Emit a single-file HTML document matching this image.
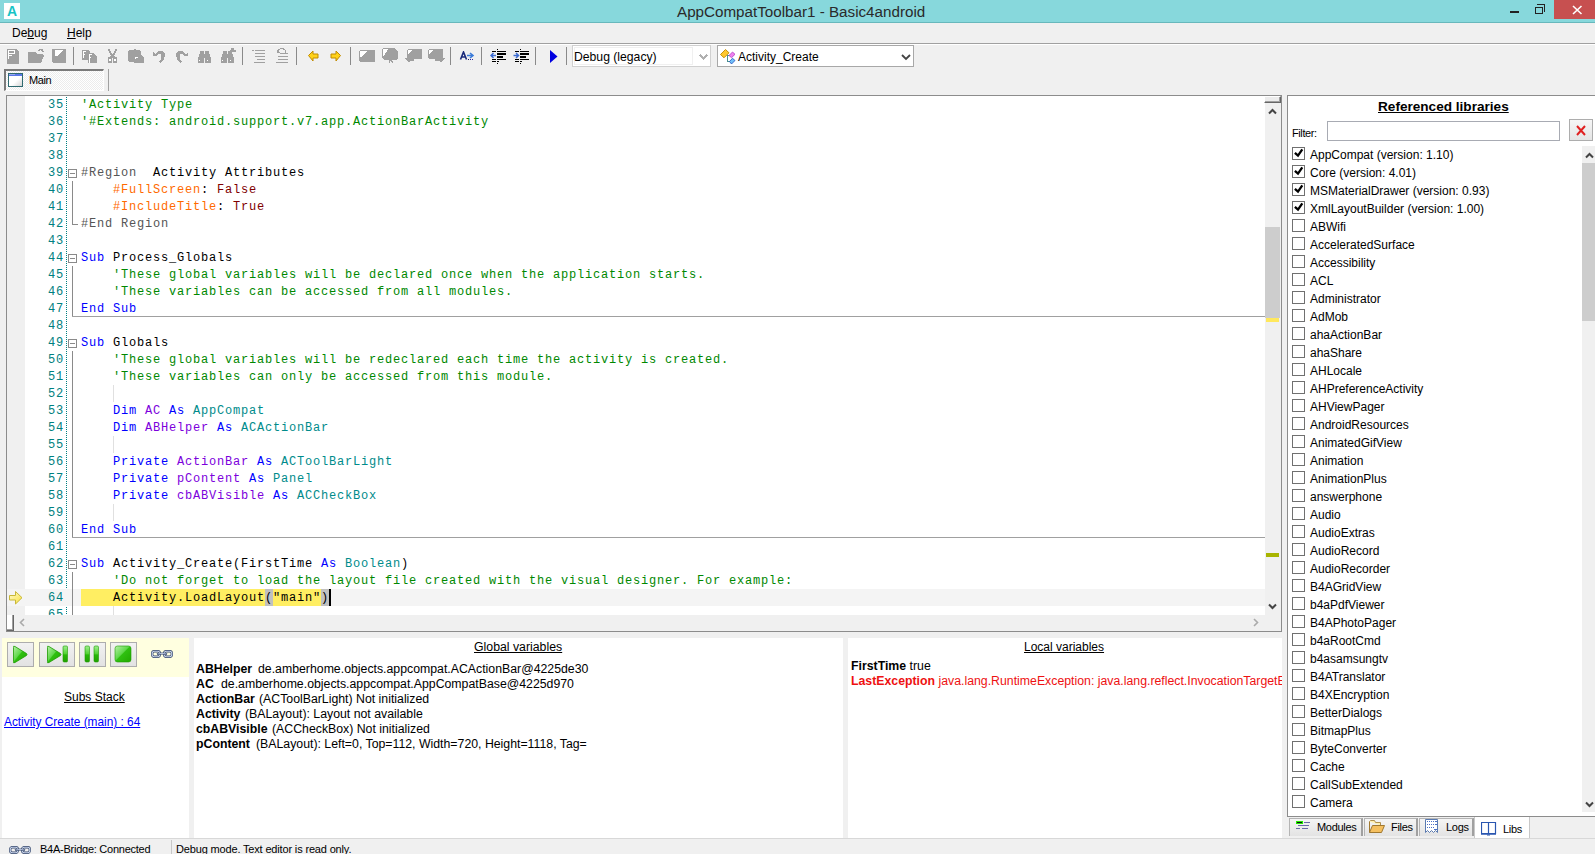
<!DOCTYPE html><html><head><meta charset="utf-8"><style>
*{margin:0;padding:0;box-sizing:border-box}
html,body{width:1595px;height:854px;overflow:hidden;background:#f0f0f0;font-family:"Liberation Sans",sans-serif;font-size:12px;color:#000}
.a{position:absolute}
.nw{white-space:nowrap}
#title{left:0;top:0;width:1595px;height:23px;background:#87d8dc;border-bottom:1px solid #68b8bc}
#menu{left:0;top:23px;width:1595px;height:20px}
.row{position:absolute;left:0;height:17px;width:1258px;font-family:"Liberation Mono",monospace;font-size:12px;letter-spacing:0.8px;line-height:17px;white-space:pre}
.ln{position:absolute;left:0;top:1px;width:57px;text-align:right;color:#008080}
.cd{position:absolute;left:74px;top:1px}
.cm{color:#008800}.kw{color:#0000ff}.vr{color:#7c00dc}.ty{color:#008b8b}.rg{color:#555}.at{color:#ff6a00}.bo{color:#800000}
.lib{position:absolute;left:4px;height:18px;width:280px}
.cb{position:absolute;left:0;top:0;width:13px;height:13px;border:1px solid #707070;background:#fff}
.lbl{position:absolute;left:18px;top:-1px;white-space:nowrap;font-size:12px;line-height:18px}
.var{position:absolute;white-space:nowrap;font-size:12.3px;line-height:15px;margin-top:1px}
.var b{font-weight:bold;font-size:12.6px}
</style></head><body>
<div id="title" class="a">
<div class="a" style="left:4px;top:3px;width:16px;height:16px;background:#fff;color:#19c3c6;font-weight:bold;font-size:14px;line-height:16px;text-align:center">A</div>
<div class="a nw" style="left:677px;top:2px;font-size:15.2px;line-height:19px;color:#2a2a2a">AppCompatToolbar1 - Basic4android</div>
<div class="a" style="left:1510px;top:11px;width:9px;height:2px;background:#222"></div>
<div class="a" style="left:1535px;top:7px;width:8px;height:7px;border:1px solid #222"></div>
<div class="a" style="left:1537px;top:4px;width:8px;height:8px;border-top:1px solid #222;border-right:1px solid #222"></div>
<div class="a" style="left:1554px;top:0;width:41px;height:19px;background:#c75050"></div>
<svg class="a" style="left:1572px;top:5px" width="11" height="10"><path d="M1 1L9.5 9M9.5 1L1 9" stroke="#fff" stroke-width="1.6"/></svg>
</div>
<div class="a" style="left:0;top:43px;width:1595px;height:1px;background:#a0a0a0"></div>
<div class="a" style="left:0;top:44px;width:1595px;height:1px;background:#fff"></div>
<svg class="a" style="left:7px;top:49px" width="13" height="15" shape-rendering="crispEdges"><path d="M0 0H9L12 3V15H0Z" fill="#a0a0a0"/><rect x="1" y="1" width="7" height="1" fill="#fff"/><rect x="1" y="1" width="1" height="9" fill="#fff"/><rect x="2" y="4" width="5" height="1" fill="#fff"/><rect x="2" y="6" width="3" height="1" fill="#fff"/><rect x="7" y="1" width="1" height="4" fill="#fff"/></svg>
<svg class="a" style="left:28px;top:49px" width="17" height="15" shape-rendering="crispEdges"><path d="M0 3H7L9 5H14L16 7L13 14H0Z" fill="#a0a0a0"/><path d="M10 2Q12 0 14 1L15 3" stroke="#a0a0a0" stroke-width="1.5" fill="none"/></svg>
<svg class="a" style="left:52px;top:49px" width="15" height="15" shape-rendering="crispEdges"><path d="M0 0H14V14H1L0 13Z" fill="#a0a0a0"/><path d="M3 1H11L5 7H3Z" fill="#fff"/></svg>
<div class="a" style="left:73px;top:47px;width:1px;height:18px;background:#8a8a8a"></div>
<div class="a" style="left:242px;top:47px;width:1px;height:18px;background:#8a8a8a"></div>
<div class="a" style="left:296px;top:47px;width:1px;height:18px;background:#8a8a8a"></div>
<div class="a" style="left:350px;top:47px;width:1px;height:18px;background:#8a8a8a"></div>
<div class="a" style="left:450px;top:47px;width:1px;height:18px;background:#8a8a8a"></div>
<div class="a" style="left:481px;top:47px;width:1px;height:18px;background:#8a8a8a"></div>
<div class="a" style="left:535px;top:47px;width:1px;height:18px;background:#8a8a8a"></div>
<div class="a" style="left:566px;top:47px;width:1px;height:18px;background:#8a8a8a"></div>
<svg class="a" style="left:82px;top:50px" width="16" height="14" shape-rendering="crispEdges"><path d="M0 0H6L8 2V10H0Z" fill="#a0a0a0"/><path d="M6 3H11L15 6V13H6Z" fill="#a0a0a0"/><rect x="1" y="1" width="1" height="7" fill="#fff"/><rect x="1" y="1" width="3" height="1" fill="#fff"/><rect x="1" y="4" width="2" height="1" fill="#fff"/><rect x="7" y="4" width="1" height="9" fill="#fff"/><rect x="7" y="4" width="3" height="1" fill="#fff"/><rect x="7" y="7" width="2" height="1" fill="#fff"/></svg>
<svg class="a" style="left:108px;top:49px" width="10" height="15" shape-rendering="crispEdges"><rect x="0" y="0" width="2" height="2" fill="#a0a0a0"/><rect x="7" y="0" width="2" height="2" fill="#a0a0a0"/><rect x="1" y="2" width="2" height="2" fill="#a0a0a0"/><rect x="6" y="2" width="2" height="2" fill="#a0a0a0"/><rect x="2" y="4" width="2" height="2" fill="#a0a0a0"/><rect x="5" y="4" width="2" height="2" fill="#a0a0a0"/><rect x="3" y="5" width="3" height="3" fill="#a0a0a0"/><rect x="0" y="8" width="4" height="6" fill="#a0a0a0"/><rect x="5" y="8" width="4" height="6" fill="#a0a0a0"/><rect x="2" y="7" width="5" height="2" fill="#a0a0a0"/><rect x="1" y="10" width="2" height="2" fill="#fff"/><rect x="6" y="10" width="2" height="2" fill="#fff"/></svg>
<svg class="a" style="left:128px;top:49px" width="17" height="15" shape-rendering="crispEdges"><path d="M1 1H6V0H8V1H12L13 3V6L16 9V14H6V13H1L0 12V2Z" fill="#a0a0a0"/><rect x="7" y="8" width="3" height="1" fill="#fff"/><rect x="7" y="8" width="1" height="2" fill="#fff"/></svg>
<svg class="a" style="left:153px;top:50px" width="13" height="14" shape-rendering="crispEdges"><path d="M0 2L2 4Q5 0 9 1Q12 2 12 6Q11 10 8 13L6 12Q9 9 8 5Q7 3 5 4L4 6L0 6Z" fill="#a0a0a0"/></svg>
<svg class="a" style="left:176px;top:50px" width="13" height="14" shape-rendering="crispEdges"><path d="M12 2L10 4Q7 0 3 1Q0 2 0 6Q1 10 4 13L6 12Q3 9 4 5Q5 3 7 4L8 6L12 6Z" fill="#a0a0a0"/></svg>
<svg class="a" style="left:197px;top:51px" width="15" height="13" shape-rendering="crispEdges"><path d="M3 0H7V3H8V0H12V3H13V6H14V12H8V7H7V12H1V6H2V3H3Z" fill="#a0a0a0"/><rect x="2" y="9" width="1" height="1" fill="#fff"/><rect x="10" y="9" width="1" height="1" fill="#fff"/></svg>
<svg class="a" style="left:220px;top:48px" width="17" height="16" shape-rendering="crispEdges"><g transform="translate(0,3)"><path d="M3 0H7V3H8V0H12V3H13V6H14V12H8V7H7V12H1V6H2V3H3Z" fill="#a0a0a0"/><rect x="2" y="9" width="1" height="1" fill="#fff"/><rect x="10" y="9" width="1" height="1" fill="#fff"/></g><rect x="11" y="0" width="3" height="2" fill="#a0a0a0"/><rect x="10" y="2" width="6" height="2" fill="#a0a0a0"/></svg>
<svg class="a" style="left:252px;top:50px" width="14" height="14" shape-rendering="crispEdges"><rect x="0" y="0" width="2" height="1" fill="#a0a0a0"/><rect x="3" y="0" width="10" height="1" fill="#a0a0a0"/><rect x="3" y="3" width="10" height="1" fill="#a0a0a0"/><rect x="3" y="6" width="10" height="1" fill="#a0a0a0"/><rect x="5" y="9" width="8" height="1" fill="#a0a0a0"/><rect x="2" y="12" width="11" height="1" fill="#a0a0a0"/></svg>
<svg class="a" style="left:276px;top:48px" width="13" height="16" shape-rendering="crispEdges"><path d="M1 3L4 1Q7 0 9 2L9 5H12" stroke="#a0a0a0" fill="none"/><path d="M1 2V5H4Z" fill="#a0a0a0"/><rect x="4" y="5" width="8" height="1" fill="#a0a0a0"/><rect x="2" y="8" width="10" height="1" fill="#a0a0a0"/><rect x="2" y="11" width="10" height="1" fill="#a0a0a0"/><rect x="0" y="14" width="12" height="1" fill="#a0a0a0"/></svg>
<svg class="a" style="left:308px;top:50px" width="11" height="12" shape-rendering="crispEdges"><path d="M0.5 5.5L5 1V4H10V8H5V11Z" fill="#ffd21a" stroke="#c08a00" stroke-width="1" shape-rendering="auto"/></svg>
<svg class="a" style="left:330px;top:50px" width="11" height="12" shape-rendering="crispEdges"><path d="M10.5 5.5L6 1V4H1V8H6V11Z" fill="#ffd21a" stroke="#c08a00" stroke-width="1" shape-rendering="auto"/></svg>
<svg class="a" style="left:359px;top:50px" width="16" height="12" shape-rendering="crispEdges"><path d="M1 0H15L16 1V11L15 12H1L0 11V1Z" fill="#a0a0a0"/><path d="M1 1H9L2 7H1Z" fill="#fff"/></svg>
<svg class="a" style="left:382px;top:48px" width="16" height="16" shape-rendering="crispEdges"><path d="M1 0H12L16 4V11L13 12H9L11 14V15H10L8 13V15H7V12H3L0 10V1Z" fill="#a0a0a0"/><path d="M1 1H6L2 8H1Z" fill="#fff"/></svg>
<svg class="a" style="left:405px;top:49px" width="17" height="14" shape-rendering="crispEdges"><path d="M3 0H16L17 1V9L16 10H9V12H5L4 14L0 9H2V1Z" fill="#a0a0a0"/><path d="M3 1H7L3 5Z" fill="#fff"/></svg>
<svg class="a" style="left:428px;top:49px" width="17" height="14" shape-rendering="crispEdges"><path d="M1 0H14L15 1V9H17L13 14L12 12H7V10H1L0 9V1Z" fill="#a0a0a0"/><path d="M1 1H5L1 6Z" fill="#fff"/></svg>
<svg class="a" style="left:459px;top:51px" width="17" height="11" shape-rendering="crispEdges"><path d="M1.5 8.5L4.5 1L7.5 8.5M3 6H6" stroke="#1a2a7a" stroke-width="1.6" fill="none" shape-rendering="auto"/><path d="M8 4.5H13M11 2L14 4.5L11 7" stroke="#3a7ad8" stroke-width="1.6" fill="none" shape-rendering="auto"/><rect x="9" y="8" width="1" height="1" fill="#1a1a6a"/><rect x="11" y="8" width="1" height="1" fill="#2a2aaa"/><rect x="13" y="8" width="1" height="1" fill="#2a2aaa"/></svg>
<svg class="a" style="left:490px;top:49px" width="17" height="15" shape-rendering="crispEdges"><rect x="7" y="0" width="1" height="1" fill="#000"/><rect x="2" y="2" width="4" height="1" fill="#000"/><rect x="7" y="2" width="9" height="1" fill="#000"/><rect x="7" y="4" width="9" height="2" fill="#000"/><rect x="7" y="7" width="6" height="2" fill="#000"/><rect x="2" y="10" width="4" height="1" fill="#000"/><rect x="7" y="10" width="9" height="1" fill="#000"/><rect x="2" y="12" width="4" height="1" fill="#000"/><rect x="7" y="12" width="2" height="1" fill="#000"/><rect x="7" y="14" width="1" height="1" fill="#000"/><path d="M1 6.5H6M3.5 4L1 6.5L3.5 9" stroke="#3a6ad0" stroke-width="1.5" fill="none" shape-rendering="auto"/></svg>
<svg class="a" style="left:513px;top:49px" width="17" height="15" shape-rendering="crispEdges"><rect x="7" y="0" width="1" height="1" fill="#000"/><rect x="2" y="2" width="4" height="1" fill="#000"/><rect x="7" y="2" width="9" height="1" fill="#000"/><rect x="7" y="4" width="9" height="2" fill="#000"/><rect x="7" y="7" width="6" height="2" fill="#000"/><rect x="2" y="10" width="4" height="1" fill="#000"/><rect x="7" y="10" width="9" height="1" fill="#000"/><rect x="2" y="12" width="4" height="1" fill="#000"/><rect x="7" y="12" width="2" height="1" fill="#000"/><rect x="7" y="14" width="1" height="1" fill="#000"/><path d="M0.5 6.5H5.5M3 4L5.5 6.5L3 9" stroke="#3a6ad0" stroke-width="1.5" fill="none" shape-rendering="auto"/></svg>
<svg class="a" style="left:550px;top:50px" width="8" height="14" shape-rendering="crispEdges"><path d="M0 0L7.5 6.5L0 13Z" fill="#0000e0" shape-rendering="auto"/></svg>
<div class="a" style="left:572px;top:45px;width:139px;height:22px;border:1px solid #d0d0d0;background:#fff"></div>
<div class="a" style="left:574px;top:47px;width:119px;height:18px;border:1px solid #f0f0f0"></div>
<div class="a nw" style="left:574px;top:50px;font-size:12.2px;line-height:14px">Debug (legacy)</div>
<svg class="a" style="left:699px;top:54px" width="9" height="6" shape-rendering="crispEdges"><path d="M1 1L4.5 4.5L8 1" stroke="#b0b0b0" stroke-width="1.6" fill="none"/></svg>
<div class="a" style="left:717px;top:45px;width:197px;height:22px;border:1px solid #a8a8a8;background:#fff"></div>
<svg class="a" style="left:720px;top:48px" width="17" height="17" shape-rendering="crispEdges"><path d="M7 7.5H9.5M7.5 7.5V13.5H10" stroke="#4a9090" stroke-width="1" fill="none"/><path d="M0.5 6.5L5.5 1.5L9 4.8L4 9.8Z" fill="#ffc830" stroke="#c08a00" stroke-width="0.9" shape-rendering="auto"/><path d="M9 7.5L12.5 4L15 6.3L11.5 9.7Z" fill="#f080f0" stroke="#b040c0" stroke-width="0.8" shape-rendering="auto"/><path d="M9.5 13.5L12.5 10.3L15 12.5L11.5 16Z" fill="#70c0f8" stroke="#2050c0" stroke-width="0.8" shape-rendering="auto"/></svg>
<div class="a nw" style="left:738px;top:50px;font-size:12px;line-height:14px">Activity_Create</div>
<svg class="a" style="left:901px;top:54px" width="10" height="7" shape-rendering="crispEdges"><path d="M1 1L5 5L9 1" stroke="#444" stroke-width="1.8" fill="none" shape-rendering="auto"/></svg>
<div id="menu" class="a">
<div class="a nw" style="left:12px;top:3px">De<u>b</u>ug</div>
<div class="a nw" style="left:67px;top:3px"><u>H</u>elp</div>
</div>
<div class="a" style="left:6px;top:95px;width:1276px;height:537px;border:1px solid #8c8c8c;background:#fff;overflow:hidden">
<div class="a" style="left:0;top:0;width:18px;height:519px;background:#f0f0f0"></div>
<div class="a" style="left:59px;top:0;width:1px;height:519px;background:repeating-linear-gradient(transparent 0 1px,#007f80 1px 2px)"></div>
<div class="row" style="top:0px"><span class="ln">35</span><span class="cd"><span class="cm">'Activity Type</span></span></div>
<div class="row" style="top:17px"><span class="ln">36</span><span class="cd"><span class="cm">'#Extends: android.support.v7.app.ActionBarActivity</span></span></div>
<div class="row" style="top:34px"><span class="ln">37</span><span class="cd"></span></div>
<div class="row" style="top:51px"><span class="ln">38</span><span class="cd"></span></div>
<div class="row" style="top:68px"><span class="ln">39</span><span class="cd"><span class="rg">#Region</span>  Activity Attributes</span></div>
<div class="row" style="top:85px"><span class="ln">40</span><span class="cd">    <span class="at">#FullScreen</span>: <span class="bo">False</span></span></div>
<div class="row" style="top:102px"><span class="ln">41</span><span class="cd">    <span class="at">#IncludeTitle</span>: <span class="bo">True</span></span></div>
<div class="row" style="top:119px"><span class="ln">42</span><span class="cd"><span class="rg">#End Region</span></span></div>
<div class="row" style="top:136px"><span class="ln">43</span><span class="cd"></span></div>
<div class="row" style="top:153px"><span class="ln">44</span><span class="cd"><span class="kw">Sub</span> Process_Globals</span></div>
<div class="row" style="top:170px"><span class="ln">45</span><span class="cd">    <span class="cm">'These global variables will be declared once when the application starts.</span></span></div>
<div class="row" style="top:187px"><span class="ln">46</span><span class="cd">    <span class="cm">'These variables can be accessed from all modules.</span></span></div>
<div class="row" style="top:204px"><span class="ln">47</span><span class="cd"><span class="kw">End Sub</span></span></div>
<div class="row" style="top:221px"><span class="ln">48</span><span class="cd"></span></div>
<div class="row" style="top:238px"><span class="ln">49</span><span class="cd"><span class="kw">Sub</span> Globals</span></div>
<div class="row" style="top:255px"><span class="ln">50</span><span class="cd">    <span class="cm">'These global variables will be redeclared each time the activity is created.</span></span></div>
<div class="row" style="top:272px"><span class="ln">51</span><span class="cd">    <span class="cm">'These variables can only be accessed from this module.</span></span></div>
<div class="row" style="top:289px"><span class="ln">52</span><span class="cd"></span></div>
<div class="row" style="top:306px"><span class="ln">53</span><span class="cd">    <span class="kw">Dim</span> <span class="vr">AC</span> <span class="kw">As</span> <span class="ty">AppCompat</span></span></div>
<div class="row" style="top:323px"><span class="ln">54</span><span class="cd">    <span class="kw">Dim</span> <span class="vr">ABHelper</span> <span class="kw">As</span> <span class="ty">ACActionBar</span></span></div>
<div class="row" style="top:340px"><span class="ln">55</span><span class="cd"></span></div>
<div class="row" style="top:357px"><span class="ln">56</span><span class="cd">    <span class="kw">Private</span> <span class="vr">ActionBar</span> <span class="kw">As</span> <span class="ty">ACToolBarLight</span></span></div>
<div class="row" style="top:374px"><span class="ln">57</span><span class="cd">    <span class="kw">Private</span> <span class="vr">pContent</span> <span class="kw">As</span> <span class="ty">Panel</span></span></div>
<div class="row" style="top:391px"><span class="ln">58</span><span class="cd">    <span class="kw">Private</span> <span class="vr">cbABVisible</span> <span class="kw">As</span> <span class="ty">ACCheckBox</span></span></div>
<div class="row" style="top:408px"><span class="ln">59</span><span class="cd"></span></div>
<div class="row" style="top:425px"><span class="ln">60</span><span class="cd"><span class="kw">End Sub</span></span></div>
<div class="row" style="top:442px"><span class="ln">61</span><span class="cd"></span></div>
<div class="row" style="top:459px"><span class="ln">62</span><span class="cd"><span class="kw">Sub</span> Activity_Create(FirstTime <span class="kw">As</span> <span class="ty">Boolean</span>)</span></div>
<div class="row" style="top:476px"><span class="ln">63</span><span class="cd">    <span class="cm">'Do not forget to load the layout file created with the visual designer. For example:</span></span></div>
<div class="a" style="left:0;top:493px;width:1258px;height:17px;background:#f4f4f4"></div>
<div class="a" style="left:74px;top:493px;width:240px;height:17px;background:#ffee62"></div>
<div class="a" style="left:258px;top:493px;width:8px;height:17px;background:#c0c0c0"></div>
<div class="a" style="left:314px;top:493px;width:8px;height:17px;background:#c0c0c0"></div>
<div class="a" style="left:322px;top:493px;width:2px;height:17px;background:#000"></div>
<div class="row" style="top:493px"><span class="ln">64</span><span class="cd">    Activity.LoadLayout("main")</span></div>
<div class="row" style="top:510px"><span class="ln">65</span><span class="cd"></span></div>
<div class="a" style="left:61px;top:73px;width:9px;height:9px;border:1px solid #8a8a8a;background:#fff"></div>
<div class="a" style="left:63px;top:77px;width:5px;height:1px;background:#8a8a8a"></div>
<div class="a" style="left:65px;top:85px;width:1px;height:43px;background:#8a8a8a"></div>
<div class="a" style="left:65px;top:128px;width:6px;height:1px;background:#8a8a8a"></div>
<div class="a" style="left:61px;top:158px;width:9px;height:9px;border:1px solid #8a8a8a;background:#fff"></div>
<div class="a" style="left:63px;top:162px;width:5px;height:1px;background:#8a8a8a"></div>
<div class="a" style="left:65px;top:170px;width:1px;height:50px;background:#8a8a8a"></div>
<div class="a" style="left:65px;top:220px;width:1193px;height:1px;background:#a0a0a0"></div>
<div class="a" style="left:61px;top:243px;width:9px;height:9px;border:1px solid #8a8a8a;background:#fff"></div>
<div class="a" style="left:63px;top:247px;width:5px;height:1px;background:#8a8a8a"></div>
<div class="a" style="left:65px;top:255px;width:1px;height:186px;background:#8a8a8a"></div>
<div class="a" style="left:65px;top:441px;width:1193px;height:1px;background:#a0a0a0"></div>
<div class="a" style="left:61px;top:464px;width:9px;height:9px;border:1px solid #8a8a8a;background:#fff"></div>
<div class="a" style="left:63px;top:468px;width:5px;height:1px;background:#8a8a8a"></div>
<div class="a" style="left:65px;top:476px;width:1px;height:43px;background:#8a8a8a"></div>
<div class="a" style="left:65px;top:519px;width:6px;height:1px;background:#8a8a8a"></div>
<div class="a" style="left:106px;top:289px;width:1px;height:17px;background:#e0e0e0"></div>
<div class="a" style="left:106px;top:340px;width:1px;height:17px;background:#e0e0e0"></div>
<div class="a" style="left:106px;top:408px;width:1px;height:17px;background:#e0e0e0"></div>
<div class="a" style="left:106px;top:510px;width:1px;height:17px;background:#e0e0e0"></div>
<svg class="a" style="left:1px;top:494px" width="17" height="17"><defs><linearGradient id="ag" x1="0" y1="0" x2="1" y2="1"><stop offset="0" stop-color="#fffbd0"/><stop offset="1" stop-color="#f8e040"/></linearGradient></defs><path d="M1.5 5.5H7.5V1.5L14 7.7L7.5 14V10H1.5Z" fill="url(#ag)" stroke="#c8b838" stroke-width="1"/></svg>
<div class="a" style="left:1258px;top:7px;width:16px;height:512px;background:#f0f0f0"></div>
<div class="a" style="left:1257px;top:0;width:17px;height:7px;background:#ececec;border:1px solid #fff;border-right:1px solid #666;border-bottom:1px solid #666;box-shadow:inset -1px -1px 0 #a0a0a0"></div>
<svg class="a" style="left:1261px;top:12px" width="9" height="7"><path d="M1 5.5L4.5 2L8 5.5" stroke="#444" stroke-width="2" fill="none"/></svg>
<div class="a" style="left:1258px;top:131px;width:15px;height:91px;background:#cdcdcd"></div>
<div class="a" style="left:1259px;top:222px;width:13px;height:4px;background:#ffe85c"></div>
<div class="a" style="left:1259px;top:457px;width:13px;height:4px;background:#a8b400"></div>
<svg class="a" style="left:1261px;top:507px" width="9" height="7"><path d="M1 1.5L4.5 5L8 1.5" stroke="#444" stroke-width="2" fill="none"/></svg>
<div class="a" style="left:0;top:519px;width:1274px;height:16px;background:#f0f0f0"></div>
<div class="a" style="left:0;top:519px;width:7px;height:16px;background:#fff;border-right:1px solid #666;border-bottom:1px solid #666;box-shadow:inset -1px -1px 0 #a0a0a0"></div>
<svg class="a" style="left:12px;top:522px" width="6" height="9"><path d="M5 1L1.5 4.5L5 8" stroke="#aaa" stroke-width="1.6" fill="none"/></svg>
<svg class="a" style="left:1246px;top:522px" width="6" height="9"><path d="M1 1L4.5 4.5L1 8" stroke="#aaa" stroke-width="1.6" fill="none"/></svg>
</div>
<div class="a" style="left:1287px;top:95px;width:320px;height:722px;border:1px solid #8c8c8c;background:#fff;overflow:hidden">
<div class="a nw" style="left:90px;top:3px;font-weight:bold;font-size:13.6px;text-decoration:underline">Referenced libraries</div>
<div class="a nw" style="left:4px;top:31px;font-size:11px;letter-spacing:-0.4px">Filter:</div>
<div class="a" style="left:39px;top:25px;width:233px;height:20px;border:1px solid #a8abb3;background:#fff"></div>
<div class="a" style="left:281px;top:23px;width:24px;height:22px;border:1px solid #adadad;background:linear-gradient(#f6f6f6,#e4e4e4)"></div>
<svg class="a" style="left:287px;top:29px" width="12" height="11"><path d="M2 1L10 10M10 1L2 10" stroke="#e02020" stroke-width="2"/></svg>
<div class="lib" style="top:51px"><div class="cb"><svg class="a" style="left:0;top:0" width="11" height="11"><path d="M1.9 4.8L5 7.6L9.3 1.3" stroke="#000" stroke-width="2.3" fill="none"/></svg></div><div class="lbl">AppCompat (version: 1.10)</div></div>
<div class="lib" style="top:69px"><div class="cb"><svg class="a" style="left:0;top:0" width="11" height="11"><path d="M1.9 4.8L5 7.6L9.3 1.3" stroke="#000" stroke-width="2.3" fill="none"/></svg></div><div class="lbl">Core (version: 4.01)</div></div>
<div class="lib" style="top:87px"><div class="cb"><svg class="a" style="left:0;top:0" width="11" height="11"><path d="M1.9 4.8L5 7.6L9.3 1.3" stroke="#000" stroke-width="2.3" fill="none"/></svg></div><div class="lbl">MSMaterialDrawer (version: 0.93)</div></div>
<div class="lib" style="top:105px"><div class="cb"><svg class="a" style="left:0;top:0" width="11" height="11"><path d="M1.9 4.8L5 7.6L9.3 1.3" stroke="#000" stroke-width="2.3" fill="none"/></svg></div><div class="lbl">XmlLayoutBuilder (version: 1.00)</div></div>
<div class="lib" style="top:123px"><div class="cb"></div><div class="lbl">ABWifi</div></div>
<div class="lib" style="top:141px"><div class="cb"></div><div class="lbl">AcceleratedSurface</div></div>
<div class="lib" style="top:159px"><div class="cb"></div><div class="lbl">Accessibility</div></div>
<div class="lib" style="top:177px"><div class="cb"></div><div class="lbl">ACL</div></div>
<div class="lib" style="top:195px"><div class="cb"></div><div class="lbl">Administrator</div></div>
<div class="lib" style="top:213px"><div class="cb"></div><div class="lbl">AdMob</div></div>
<div class="lib" style="top:231px"><div class="cb"></div><div class="lbl">ahaActionBar</div></div>
<div class="lib" style="top:249px"><div class="cb"></div><div class="lbl">ahaShare</div></div>
<div class="lib" style="top:267px"><div class="cb"></div><div class="lbl">AHLocale</div></div>
<div class="lib" style="top:285px"><div class="cb"></div><div class="lbl">AHPreferenceActivity</div></div>
<div class="lib" style="top:303px"><div class="cb"></div><div class="lbl">AHViewPager</div></div>
<div class="lib" style="top:321px"><div class="cb"></div><div class="lbl">AndroidResources</div></div>
<div class="lib" style="top:339px"><div class="cb"></div><div class="lbl">AnimatedGifView</div></div>
<div class="lib" style="top:357px"><div class="cb"></div><div class="lbl">Animation</div></div>
<div class="lib" style="top:375px"><div class="cb"></div><div class="lbl">AnimationPlus</div></div>
<div class="lib" style="top:393px"><div class="cb"></div><div class="lbl">answerphone</div></div>
<div class="lib" style="top:411px"><div class="cb"></div><div class="lbl">Audio</div></div>
<div class="lib" style="top:429px"><div class="cb"></div><div class="lbl">AudioExtras</div></div>
<div class="lib" style="top:447px"><div class="cb"></div><div class="lbl">AudioRecord</div></div>
<div class="lib" style="top:465px"><div class="cb"></div><div class="lbl">AudioRecorder</div></div>
<div class="lib" style="top:483px"><div class="cb"></div><div class="lbl">B4AGridView</div></div>
<div class="lib" style="top:501px"><div class="cb"></div><div class="lbl">b4aPdfViewer</div></div>
<div class="lib" style="top:519px"><div class="cb"></div><div class="lbl">B4APhotoPager</div></div>
<div class="lib" style="top:537px"><div class="cb"></div><div class="lbl">b4aRootCmd</div></div>
<div class="lib" style="top:555px"><div class="cb"></div><div class="lbl">b4asamsungtv</div></div>
<div class="lib" style="top:573px"><div class="cb"></div><div class="lbl">B4ATranslator</div></div>
<div class="lib" style="top:591px"><div class="cb"></div><div class="lbl">B4XEncryption</div></div>
<div class="lib" style="top:609px"><div class="cb"></div><div class="lbl">BetterDialogs</div></div>
<div class="lib" style="top:627px"><div class="cb"></div><div class="lbl">BitmapPlus</div></div>
<div class="lib" style="top:645px"><div class="cb"></div><div class="lbl">ByteConverter</div></div>
<div class="lib" style="top:663px"><div class="cb"></div><div class="lbl">Cache</div></div>
<div class="lib" style="top:681px"><div class="cb"></div><div class="lbl">CallSubExtended</div></div>
<div class="lib" style="top:699px"><div class="cb"></div><div class="lbl">Camera</div></div>
<div class="a" style="left:294px;top:50px;width:17px;height:666px;background:#f0f0f0"></div>
<svg class="a" style="left:297px;top:56px" width="9" height="7"><path d="M1 5.5L4.5 2L8 5.5" stroke="#444" stroke-width="2" fill="none"/></svg>
<div class="a" style="left:294px;top:67px;width:17px;height:158px;background:#cdcdcd"></div>
<svg class="a" style="left:297px;top:705px" width="9" height="7"><path d="M1 1.5L4.5 5L8 1.5" stroke="#444" stroke-width="2" fill="none"/></svg>
</div>
<div class="a" style="left:1289px;top:818px;width:74px;height:18px;border-top:1px solid #b4b4b4;border-left:1px solid #b4b4b4;border-right:2px solid #a0a0a0;background:linear-gradient(#f5f5f5,#e3e3e3)"></div>
<svg class="a" style="left:1296px;top:821px" width="15" height="10"><rect x="0" y="0" width="7" height="3" fill="#22ee00"/><rect x="1" y="1" width="5" height="1" fill="#111"/><rect x="8" y="1" width="6" height="1" fill="#6a6aa8"/><rect x="2" y="4" width="11" height="1" fill="#6a6aa8"/><rect x="0" y="7" width="4" height="1" fill="#6a6aa8"/><rect x="6" y="7" width="6" height="1" fill="#6a6aa8"/></svg>
<div class="a nw" style="left:1317px;top:821px;font-size:11px;letter-spacing:-0.3px;line-height:12px">Modules</div>
<div class="a" style="left:1364px;top:818px;width:54px;height:18px;border-top:1px solid #b4b4b4;border-left:1px solid #b4b4b4;border-right:2px solid #a0a0a0;background:linear-gradient(#f5f5f5,#e3e3e3)"></div>
<svg class="a" style="left:1369px;top:820px" width="16" height="13"><path d="M0.5 1.5L1.5 0.5H5.5L6.5 2.5H11.5V5.5" fill="#fff0b0" stroke="#b09050"/><path d="M0.5 1.5V12.5H12.5L15.5 5.5H3.5L0.5 12.5" fill="#f5c060" stroke="#a07830"/></svg>
<div class="a nw" style="left:1391px;top:821px;font-size:11px;letter-spacing:-0.3px;line-height:12px">Files</div>
<div class="a" style="left:1419px;top:818px;width:55px;height:18px;border-top:1px solid #b4b4b4;border-left:1px solid #b4b4b4;border-right:2px solid #a0a0a0;background:linear-gradient(#f5f5f5,#e3e3e3)"></div>
<svg class="a" style="left:1425px;top:819px" width="14" height="16"><path d="M0.5 0.5H12.5V13.5L10.5 11.5L8.5 13.5L6.5 11.5L4.5 13.5L2.5 11.5L0.5 13.5Z" fill="#fff" stroke="#5a7ab0"/><rect x="2" y="2" width="1" height="1" fill="#4a70c8"/><rect x="4" y="2" width="1" height="1" fill="#4a70c8"/><rect x="6" y="2" width="1" height="1" fill="#4a70c8"/><rect x="8" y="2" width="1" height="1" fill="#4a70c8"/><rect x="9" y="2" width="0" height="0"/><rect x="2" y="5" width="1" height="1" fill="#4a70c8"/><rect x="4" y="5" width="1" height="1" fill="#4a70c8"/><rect x="6" y="5" width="1" height="1" fill="#4a70c8"/><rect x="8" y="5" width="1" height="1" fill="#4a70c8"/><rect x="9" y="5" width="0" height="0"/><rect x="2" y="8" width="1" height="1" fill="#4a70c8"/><rect x="4" y="8" width="1" height="1" fill="#4a70c8"/><rect x="6" y="8" width="1" height="1" fill="#4a70c8"/><rect x="8" y="8" width="1" height="1" fill="#4a70c8"/><rect x="9" y="8" width="0" height="0"/><rect x="10" y="2" width="2" height="1" fill="#4a70c8"/><rect x="10" y="5" width="2" height="1" fill="#4a70c8"/><rect x="9" y="10" width="3" height="1" fill="#4a70c8"/></svg>
<div class="a nw" style="left:1446px;top:821px;font-size:11px;letter-spacing:-0.3px;line-height:12px">Logs</div>
<div class="a" style="left:1474px;top:817px;width:56px;height:21px;border-left:1px solid #c8c8c8;border-right:1px solid #c8c8c8;background:#fff"></div>
<svg class="a" style="left:1481px;top:822px" width="16" height="14"><path d="M0.5 0.5H7.5V11.5H0.5Z M7.5 0.5H14.5V11.5H7.5Z" fill="#fff" stroke="#2a56b0" stroke-width="1.2"/><path d="M0 12H15" stroke="#2a56b0" stroke-width="1.5"/><path d="M6 13H9" stroke="#2a56b0" stroke-width="1"/></svg>
<div class="a nw" style="left:1503px;top:823px;font-size:11px;letter-spacing:-0.3px;line-height:12px">Libs</div>
<div class="a" style="left:1282px;top:838px;width:313px;height:1px;background:#fbfbfb"></div>
<div class="a" style="left:4px;top:69px;width:100px;height:22px;border-top:2px solid #7a7a7a;border-left:2px solid #7a7a7a;border-right:1px solid #fff;border-bottom:1px solid #fff;background-color:#fff;background-image:repeating-conic-gradient(#ececec 0 25%,#fff 0 50%);background-size:2px 2px"></div>
<svg class="a" style="left:8px;top:73px" width="15" height="14"><defs><linearGradient id="wg" x1="0" y1="0" x2="1" y2="1"><stop offset="0.55" stop-color="#fff"/><stop offset="1" stop-color="#d0d0d0"/></linearGradient></defs><rect x="0.5" y="0.5" width="14" height="13" fill="url(#wg)" stroke="#2f6a70"/><rect x="1" y="1" width="13" height="2" fill="#5a78e8"/><rect x="1" y="1" width="6" height="1" fill="#9aa8f0"/></svg>
<div class="a nw" style="left:29px;top:74px;font-size:11px;letter-spacing:-0.4px;line-height:12px">Main</div>
<div class="a" style="left:108px;top:69px;width:1px;height:22px;background:#a0a0a0"></div>
<div class="a" style="left:2px;top:638px;width:187px;height:39px;background:#ffffe0"></div>
<div class="a" style="left:2px;top:677px;width:187px;height:161px;background:#fff"></div>
<div class="a" style="left:7px;top:642px;width:27px;height:25px;border:1px solid #adadad;background:linear-gradient(#f2f2f2,#e2e2e2)"></div>
<div class="a" style="left:39px;top:642px;width:36px;height:25px;border:1px solid #adadad;background:linear-gradient(#f2f2f2,#e2e2e2)"></div>
<div class="a" style="left:79px;top:642px;width:27px;height:25px;border:1px solid #adadad;background:linear-gradient(#f2f2f2,#e2e2e2)"></div>
<div class="a" style="left:110px;top:642px;width:27px;height:25px;border:1px solid #adadad;background:linear-gradient(#f2f2f2,#e2e2e2)"></div>
<svg class="a" style="left:0;top:0" width="180" height="680"><defs><linearGradient id="gg" x1="0" y1="0" x2="1" y2="1"><stop offset="0" stop-color="#b8f0a8"/><stop offset="0.45" stop-color="#5fd84a"/><stop offset="0.5" stop-color="#2fc010"/><stop offset="1" stop-color="#22a800"/></linearGradient><linearGradient id="gb" x1="0" y1="0" x2="0" y2="1"><stop offset="0" stop-color="#a0f090"/><stop offset="0.5" stop-color="#50d030"/><stop offset="0.55" stop-color="#28b808"/><stop offset="1" stop-color="#20a000"/></linearGradient></defs><path d="M13.5 647.5Q13 645.5 15 646.5L26.5 653.5Q27.5 654.5 26.5 655.5L15 662.5Q13 663.5 13.5 661.5Z" fill="url(#gg)" stroke="#1c9a00" stroke-width="0.8"/><path d="M47.5 647.5Q47 645.5 49 646.5L60.5 653.5Q61.5 654.5 60.5 655.5L49 662.5Q47 663.5 47.5 661.5Z" fill="url(#gg)" stroke="#1c9a00" stroke-width="0.8"/><rect x="63" y="646" width="4.5" height="16" rx="1" fill="url(#gb)" stroke="#1c9a00" stroke-width="0.6"/><rect x="85" y="646" width="4.5" height="16" rx="1.2" fill="url(#gb)" stroke="#1c9a00" stroke-width="0.6"/><rect x="94" y="646" width="4.5" height="16" rx="1.2" fill="url(#gb)" stroke="#1c9a00" stroke-width="0.6"/><rect x="115" y="646" width="16" height="16" rx="2.5" fill="url(#gg)" stroke="#1c9a00" stroke-width="0.6"/><rect x="152.2" y="651.2" width="7.6" height="5.6" rx="2.2" fill="none" stroke="#34466a" stroke-width="2.4"/><rect x="152.2" y="651.2" width="7.6" height="5.6" rx="2.2" fill="none" stroke="#c8d4ec" stroke-width="1.1"/><rect x="164.2" y="651.2" width="7.6" height="5.6" rx="2.2" fill="none" stroke="#34466a" stroke-width="2.4"/><rect x="164.2" y="651.2" width="7.6" height="5.6" rx="2.2" fill="none" stroke="#c8d4ec" stroke-width="1.1"/><path d="M157 654.3Q162 652.5 167 654.3" stroke="#34466a" stroke-width="2" fill="none"/><path d="M157.5 654Q162 652.8 166.5 654" stroke="#c8d4ec" stroke-width="0.9" fill="none"/></svg>
<div class="a nw" style="left:64px;top:690px;text-decoration:underline">Subs Stack</div>
<div class="a nw" style="left:4px;top:715px;font-size:11.85px;color:#0000ff;text-decoration:underline">Activity&nbsp;Create (main) : 64</div>
<div class="a" style="left:194px;top:638px;width:649px;height:200px;background:#fff"></div>
<div class="a nw" style="left:474px;top:640px;font-size:12.3px;text-decoration:underline">Global variables</div>
<div class="var" style="left:196px;top:661px"><b style="font-size:12.3px">ABHelper</b></div>
<div class="var" style="left:258px;top:661px">de.amberhome.objects.appcompat.ACActionBar@4225de30</div>
<div class="var" style="left:196px;top:676px"><b style="font-size:12.3px">AC</b></div>
<div class="var" style="left:221px;top:676px">de.amberhome.objects.appcompat.AppCompatBase@4225d970</div>
<div class="var" style="left:196px;top:691px"><b style="font-size:12.3px">ActionBar</b></div>
<div class="var" style="left:259px;top:691px">(ACToolBarLight) Not initialized</div>
<div class="var" style="left:196px;top:706px"><b style="font-size:12.3px">Activity</b></div>
<div class="var" style="left:245px;top:706px">(BALayout): Layout not available</div>
<div class="var" style="left:196px;top:721px"><b style="font-size:12.3px">cbABVisible</b></div>
<div class="var" style="left:272px;top:721px">(ACCheckBox) Not initialized</div>
<div class="var" style="left:196px;top:736px"><b style="font-size:12.3px">pContent</b></div>
<div class="var" style="left:256px;top:736px">(BALayout): Left=0, Top=112, Width=720, Height=1118, Tag=</div>
<div class="a" style="left:848px;top:638px;width:434px;height:200px;background:#fff;overflow:hidden">
<div class="a nw" style="left:176px;top:2px;text-decoration:underline">Local variables</div>
<div class="var" style="left:3px;top:20px"><b style="font-size:12.3px">FirstTime</b> true</div>
<div class="var" style="left:3px;top:35px;color:#ee1111"><b style="font-size:12.3px">LastException</b> java.lang.RuntimeException: java.lang.reflect.InvocationTargetException</div>
</div>
<div class="a" style="left:0;top:838px;width:1595px;height:1px;background:#d8d8d8"></div>
<div class="a" style="left:171px;top:840px;width:1px;height:14px;background:#c8c8c8"></div>
<svg class="a" style="left:0;top:840px" width="40" height="14"><rect x="10.2" y="7.2" width="7.6" height="5.6" rx="2.2" fill="none" stroke="#34466a" stroke-width="2.4"/><rect x="10.2" y="7.2" width="7.6" height="5.6" rx="2.2" fill="none" stroke="#c8d4ec" stroke-width="1.1"/><rect x="22.2" y="7.2" width="7.6" height="5.6" rx="2.2" fill="none" stroke="#34466a" stroke-width="2.4"/><rect x="22.2" y="7.2" width="7.6" height="5.6" rx="2.2" fill="none" stroke="#c8d4ec" stroke-width="1.1"/><path d="M15 10.3Q20 8.5 25 10.3" stroke="#34466a" stroke-width="2" fill="none"/><path d="M15.5 10Q20 8.8 24.5 10" stroke="#c8d4ec" stroke-width="0.9" fill="none"/></svg>
<div class="a nw" style="left:40px;top:843px;font-size:11px;letter-spacing:-0.25px">B4A-Bridge: Connected</div>
<div class="a nw" style="left:176px;top:843px;font-size:11px;letter-spacing:-0.16px">Debug mode. Text editor is read only.</div>
</body></html>
